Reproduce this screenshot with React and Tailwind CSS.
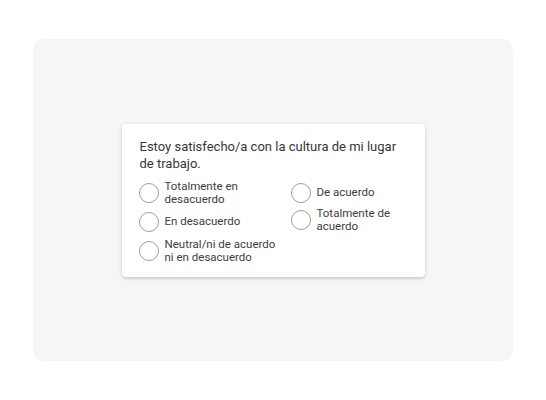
import React from "react";

function Radio({ children, className = "" }) {
  return (
    <div className={"flex items-center gap-[6px] " + className}>
      <span className="block w-[20px] h-[20px] shrink-0 rounded-full border border-[#9d9d9d] bg-white" />
      <span className="text-[11.5px] leading-[13px] text-[#3d3d3d]">{children}</span>
    </div>
  );
}

export default function App() {
  return (
    <div
      className="w-[546px] h-[400px] bg-white pt-[39px] pl-[33px]"
      style={{ fontFamily: 'Roboto, "Noto Sans", sans-serif' }}
    >
      <div className="w-[480px] h-[322px] rounded-[10px] bg-[#f6f6f6] flex items-center justify-center">
        <div className="w-[303px] rounded-[4px] bg-white pt-[14px] pb-[13px] pl-[17px] pr-[12px] shadow-[0_1px_4px_rgba(0,0,0,0.14),0_2px_2px_rgba(0,0,0,0.08)]">
          <p className="text-[13px] leading-[17px] text-[#363636] pl-[1px]">
            Estoy satisfecho/a con la cultura de mi lugar
            <br />
            de trabajo.
          </p>
          <div className="mt-[8px] grid grid-cols-[152px_1fr]">
            <div className="flex flex-col gap-[6px]">
              <Radio>
                Totalmente en
                <br />
                desacuerdo
              </Radio>
              <Radio>En desacuerdo</Radio>
              <Radio>
                Neutral/ni de acuerdo
                <br />
                ni en desacuerdo
              </Radio>
            </div>
            <div className="flex flex-col gap-[4px] pt-[3px]">
              <Radio>De acuerdo</Radio>
              <Radio>
                Totalmente de
                <br />
                acuerdo
              </Radio>
            </div>
          </div>
        </div>
      </div>
    </div>
  );
}
